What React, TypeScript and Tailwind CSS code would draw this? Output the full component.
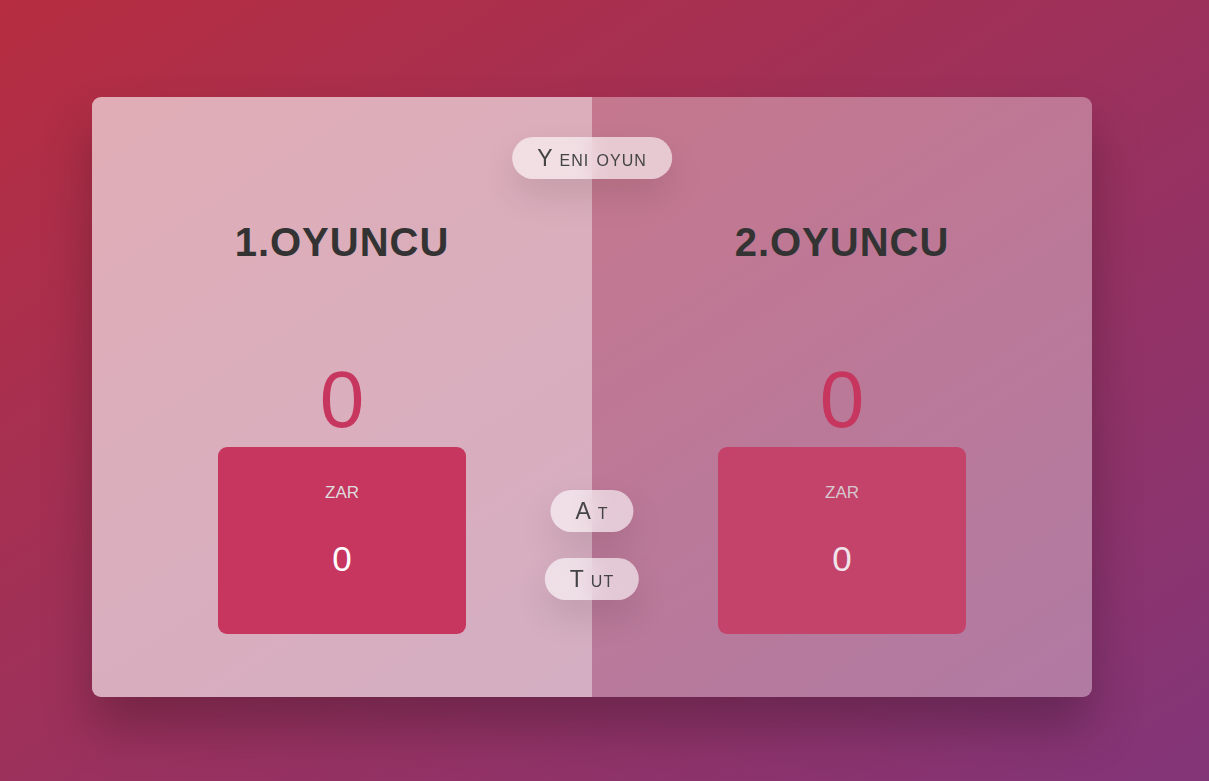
import React from "react";

function Player({ name, active }: { name: string; active: boolean }) {
  return (
    <section
      className={`flex-1 flex flex-col items-center pt-[122px] pb-[63px] ${active ? "bg-white/40" : ""}`}
    >
      <h2 className="text-[40px] leading-[46px] font-bold text-[#333] uppercase tracking-[1px] [word-spacing:2px] mb-[89px]">
        {name}
      </h2>
      <p className="text-[80px] leading-[92px] text-[#c7365f]">0</p>
      <div
        className={`mt-auto w-[248px] h-[187px] rounded-[9px] bg-[#c7365f] text-white text-center pt-[36px] ${active ? "" : "opacity-80"}`}
      >
        <p className="uppercase text-[17px] leading-[20px] text-[#ddd] mb-[36px]">Zar</p>
        <p className="text-[35px] leading-[40px]">0</p>
      </div>
    </section>
  );
}

function Btn({ label, top }: { label: string; top: string }) {
  return (
    <button
      className={`absolute left-1/2 -translate-x-1/2 ${top} text-[#444] text-[23px] leading-[26px] [font-variant:small-caps] tracking-[1px] first-letter:mr-[6px] bg-white/60 backdrop-blur-[10px] px-[25px] py-[8px] rounded-full shadow-[0_17px_35px_rgba(0,0,0,0.1)] whitespace-nowrap`}
    >
      {label}
    </button>
  );
}

export default function App() {
  return (
    <div
      className="min-h-screen w-full bg-[linear-gradient(to_top_left,#823578_0%,#b62d40_100%)] pt-[97px] pl-[92px] font-[family-name:'Liberation_Sans',Arial,sans-serif]"
    >
      <main className="relative w-[1000px] h-[600px] bg-white/35 rounded-[9px] overflow-hidden flex shadow-[0_30px_50px_rgba(0,0,0,0.25)]">
        <Player name="1.Oyuncu" active />
        <Player name="2.Oyuncu" active={false} />
        <Btn label="Yeni oyun" top="top-[40px]" />
        <Btn label="At" top="top-[393px]" />
        <Btn label="Tut" top="top-[461px]" />
      </main>
    </div>
  );
}
